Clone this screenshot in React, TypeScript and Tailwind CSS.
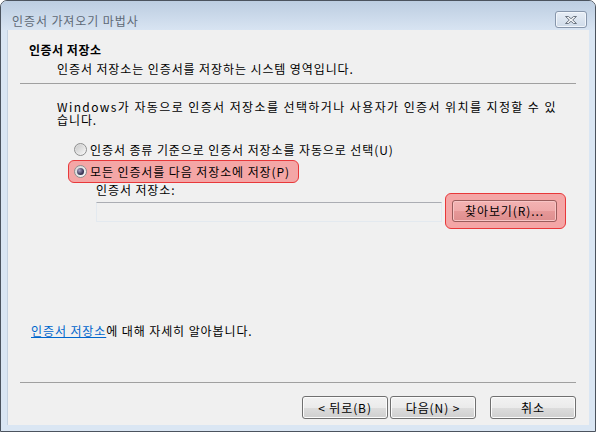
const font = { fontFamily: '"Noto Sans CJK KR", "Noto Sans", sans-serif' };

function Radio({ checked }: { checked?: boolean }) {
  return (
    <span className="relative flex h-[13px] w-[13px] shrink-0 items-center justify-center rounded-full border border-[#8e8f8f] bg-gradient-to-br from-[#d6d6d6] to-[#f8f8f8]">
      {checked ? (
        <span className="h-[7px] w-[7px] rounded-full bg-[radial-gradient(circle_at_35%_35%,#a9a0c4,#3d3a5a_60%,#1f1c33)]" />
      ) : (
        <span className="h-[9px] w-[9px] rounded-full bg-gradient-to-br from-[#cbcbcb] to-[#f4f4f4]" />
      )}
    </span>
  );
}

function WinButton({ label, className = "" }: { label: string; className?: string }) {
  return (
    <button
      className={`flex h-[23px] w-[86px] items-center justify-center rounded-[3px] border border-[#707070] bg-[linear-gradient(#f2f2f2_0%,#ebebeb_50%,#dddddd_50%,#cfcfcf_100%)] text-[12px] leading-none text-black shadow-[inset_0_0_0_1px_#fcfcfc] ${className}`}
    >
      {label}
    </button>
  );
}

export default function App() {
  return (
    <div
      className="flex h-[432px] w-[596px] flex-col overflow-hidden rounded-t-[7px] border border-[#4b535e] bg-[#dae6f3] text-[12px] leading-[13px] tracking-[0.9px] text-black"
      style={font}
    >
      {/* Title bar */}
      <div className="flex h-[29px] shrink-0 items-center bg-gradient-to-b from-[#bccde1] to-[#d8e4f2] pl-[11px] pr-[8px]">
        <span className="mt-[10px] text-[#5e6976]">인증서 가져오기 마법사</span>
        <div className="ml-auto mt-[8px] flex h-[17px] w-[32px] items-center justify-center rounded-[3px] border border-[#8796ab] bg-gradient-to-b from-[#e8eef6] to-[#cfdbe9] shadow-[inset_0_0_0_1px_#f2f6fb]">
          <svg width="14" height="10" viewBox="0 0 14 10">
            <path
              d="M1.5 1.5h3l2.5 2.2 2.5-2.2h3l-3.8 3.5 3.8 3.5h-3L7 6.3 4.5 8.5h-3l3.8-3.5z"
              fill="#f4f6f8"
              stroke="#6b7480"
              strokeWidth="1"
              strokeLinejoin="round"
            />
          </svg>
        </div>
      </div>

      {/* Content */}
      <div className="mx-[6px] mb-[6px] flex flex-1 flex-col border-l border-[#c5d2e0] bg-[#f0f0f0] pt-[13px]">
        <div className="pl-[21px] font-bold tracking-[0.5px]">인증서 저장소</div>
        <div className="mt-[6px] pl-[49px]">인증서 저장소는 인증서를 저장하는 시스템 영역입니다.</div>
        <div className="ml-[12px] mr-[13px] mt-[8px] border-t border-[#a0a0a0]" />

        <div className="mt-[16px] pl-[49px]">
          <div className="h-[13px] whitespace-nowrap tracking-[1.4px]">
            Windows가 자동으로 인증서 저장소를 선택하거나 사용자가 인증서 위치를 지정할 수 있
          </div>
          <div className="h-[13px]">습니다.</div>
        </div>

        <div className="mt-[15px] flex h-[17px] items-center gap-[3px] pl-[66px]">
          <Radio />
          <span>인증서 종류 기준으로 인증서 저장소를 자동으로 선택(U)</span>
        </div>

        <div className="ml-[60px] mt-[2px] flex h-[23px] w-[231px] items-center gap-[3px] rounded-[6px] border border-[#e8383a] bg-[#f4a6a6] pl-[5px]">
          <Radio checked />
          <span className="whitespace-nowrap">모든 인증서를 다음 저장소에 저장(P)</span>
        </div>

        <div className="flex items-start pl-[88px]">
          <div className="flex flex-col">
            <span className="h-[13px]">인증서 저장소:</span>
            <div className="mt-[6px] h-[20px] w-[346px] border border-[#e3e9ef] border-t-[#abadb3] bg-[#f0f0f0]" />
          </div>
          <div className="ml-[3px] mt-[10px] flex h-[36px] w-[121px] items-start rounded-[6px] border border-[#e8383a] bg-[#f4a6a6] pl-[6px] pt-[6px]">
            <button className="flex h-[22px] w-[105px] items-center justify-center rounded-[3px] border border-[#9a5c5c] bg-[linear-gradient(#f3b3b3_0%,#efa9a9_50%,#e69898_50%,#de8e8e_100%)] leading-none tracking-[0.9px] shadow-[inset_0_0_0_1px_#f8c4c4]">
              찾아보기(R)...
            </button>
          </div>
        </div>

        <div className="mt-[95px] pl-[23px]">
          <span className="text-[#0066cc] underline underline-offset-[1px]">인증서 저장소</span>
          에 대해 자세히 알아봅니다.
        </div>

        <div className="ml-[12px] mr-[13px] mt-auto border-t border-[#a0a0a0]" />

        <div className="mb-[6px] mt-[13px] flex justify-end pr-[13px]">
          <WinButton label="< 뒤로(B)" />
          <WinButton label="다음(N) >" className="ml-[2px] tracking-[0.9px]" />
          <WinButton label="취소" className="ml-[14px] tracking-[0.9px]" />
        </div>
      </div>
    </div>
  );
}
